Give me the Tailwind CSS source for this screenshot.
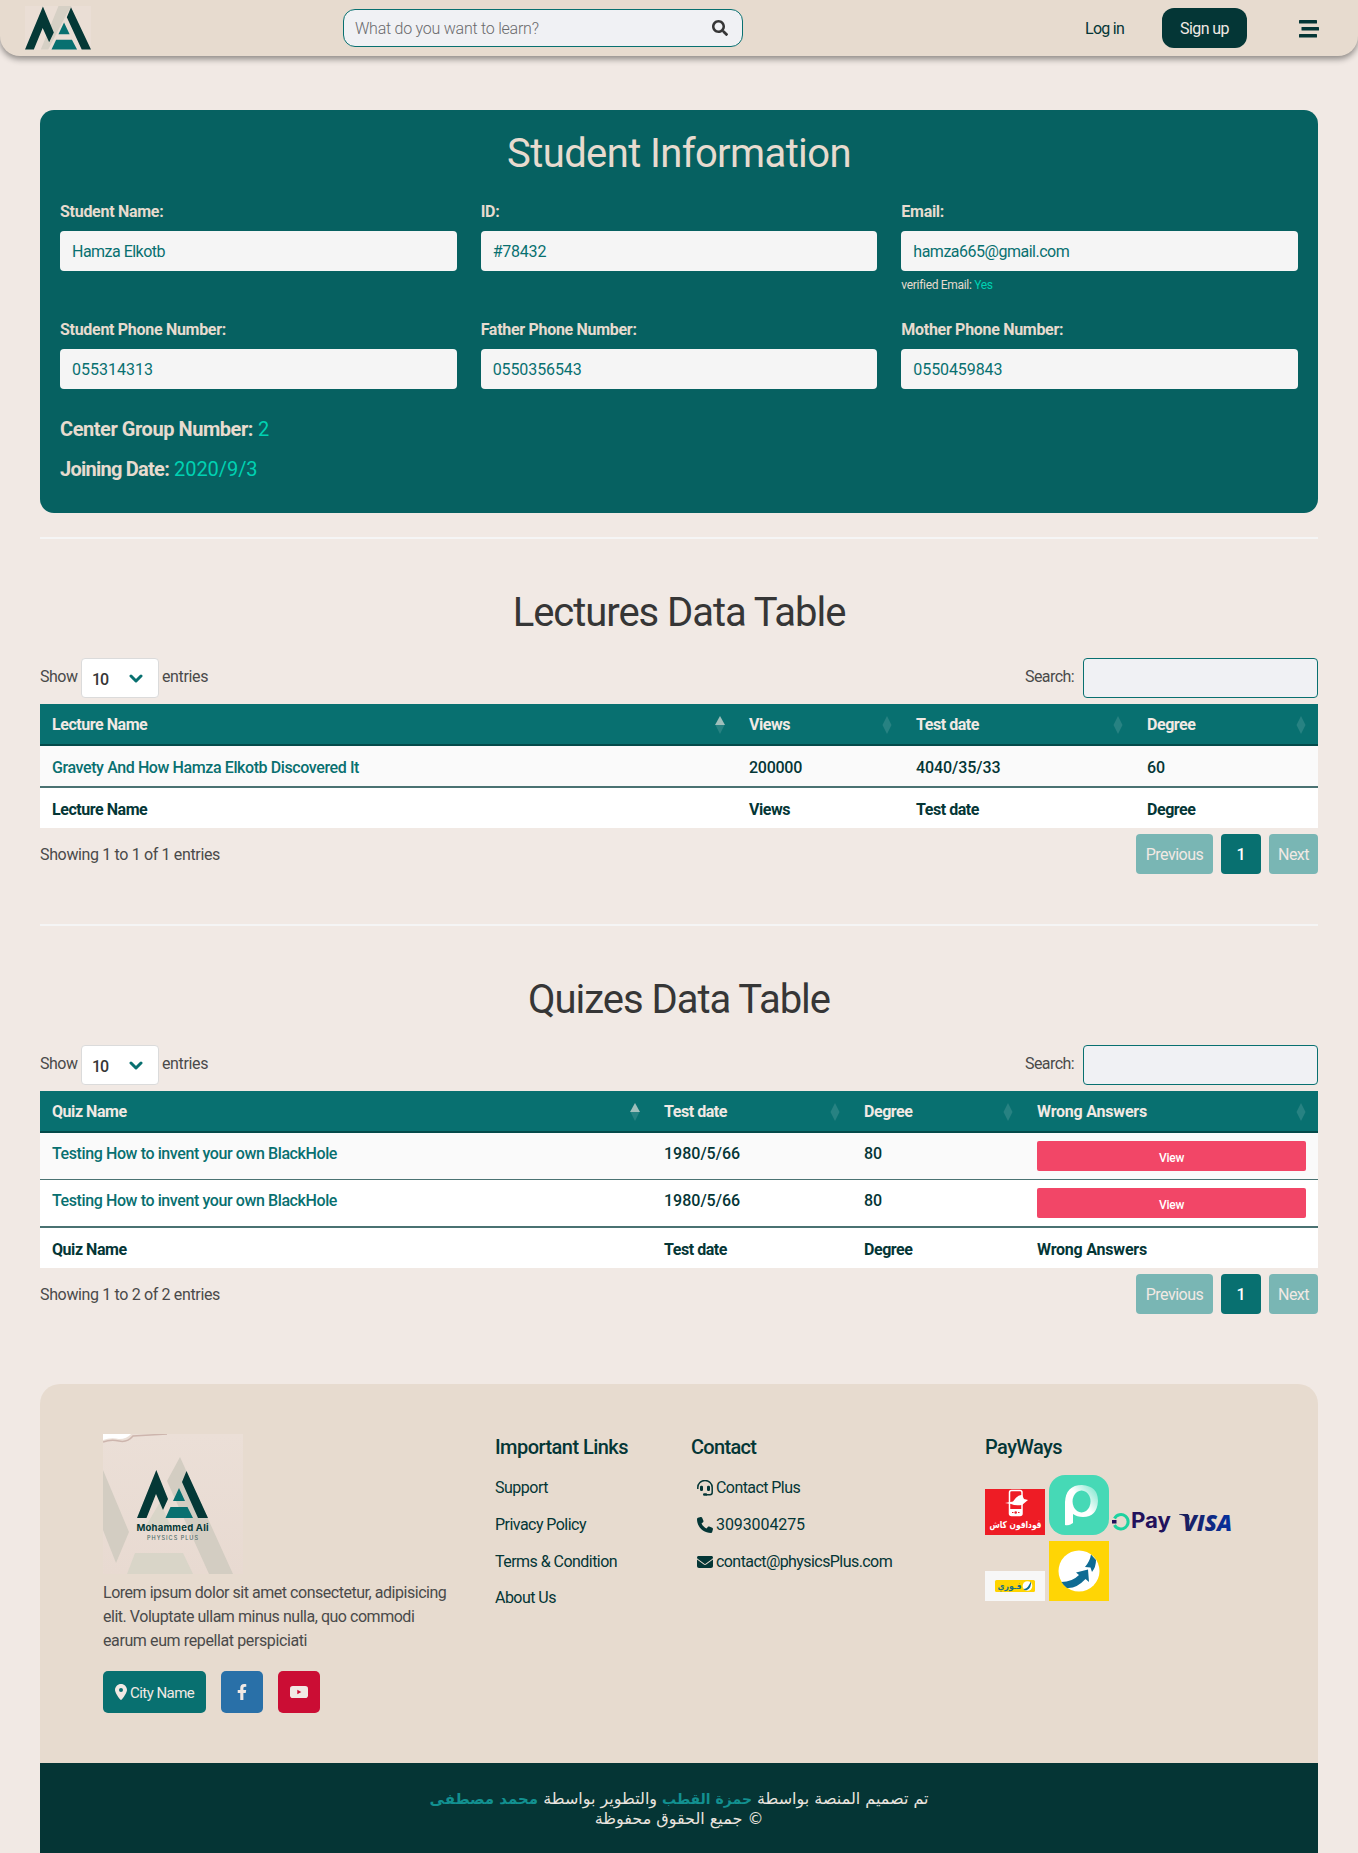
<!DOCTYPE html>
<html lang="en">
<head>
<meta charset="utf-8">
<title>Physics Plus</title>
<script src="https://cdn.jsdelivr.net/npm/@tailwindcss/browser@4"></script>
</head>
<body class="h-[1853px] overflow-hidden bg-[#f1e9e4] font-['Roboto','DejaVu_Sans',sans-serif] text-base leading-6 text-[#4a4a4a]">

<svg class="hidden">
  <symbol id="mark" viewBox="34 35.5 71 49" preserveAspectRatio="none">
    <path fill="#043836" d="M34 84 53.300 36 65 65 60 76 53 60 43.500 84ZM83.500 37 105 84H95L79 48Z"/>
    <path fill="#087070" d="M76 54 82 67H70ZM67.500 73H84.500L90 84H62.500Z"/>
  </symbol>
  <symbol id="chevron" viewBox="0 0 14 9"><path d="M2 2 7 7 12 2" fill="none" stroke="#087070" stroke-width="3" stroke-linecap="round" stroke-linejoin="round"/></symbol>
  <symbol id="sort" viewBox="0 0 10 18"><path d="M5 0 9.500 9H.5Z" fill="#fff" fill-opacity=".13"/><path d="M5 18 9.500 9H.5Z" fill="#fff" fill-opacity=".13"/></symbol>
  <symbol id="sort-up" viewBox="0 0 10 18"><path d="M5 0 10 9H0Z" fill="#f1e9e4" fill-opacity=".65"/><path d="M5 18 9.500 9H.5Z" fill="#fff" fill-opacity=".13"/></symbol>
</svg>

<nav class="flex h-14 items-center rounded-b-[20px] bg-[#e7dbcf] pl-[25px] shadow-[0_3px_6px_rgba(0,0,0,0.42)]">
  <div class="h-11 w-[66px] bg-[#eaded5]">
    <svg class="h-11 w-[66px]" viewBox="34 35.500 71 49" preserveAspectRatio="none">
      <path fill="#d6d0c5" d="M70 35.500H84L77 48 59 84H51Z"/>
      <use href="#mark" x="34" y="35.500" width="71" height="49"/>
    </svg>
  </div>
  <div class="ml-[252px] flex h-[38px] w-[400px] items-center justify-between rounded-xl border border-[#087070] bg-[#f0f1f4] pr-[14px] pl-[11px]">
    <span class="pt-px font-light tracking-[-0.24px] text-[#6a6a6c]">What do you want to learn?</span>
    <svg class="size-4" viewBox="0 0 512 512" fill="#363636"><path d="M505 442.700L405.300 343c-4.500-4.500-10.600-7-17-7H372c27.600-35.300 44-79.700 44-128C416 93.100 322.900 0 208 0S0 93.100 0 208s93.100 208 208 208c48.300 0 92.700-16.400 128-44v16.300c0 6.400 2.500 12.500 7 17l99.700 99.700c9.400 9.400 24.600 9.400 33.900 0l28.300-28.300c9.400-9.400 9.400-24.600.1-34zM208 336c-70.700 0-128-57.200-128-128 0-70.700 57.200-128 128-128 70.700 0 128 57.200 128 128 0 70.700-57.200 128-128 128z"/></svg>
  </div>
  <a class="ml-[342px] w-[40px] pt-[2px] whitespace-nowrap tracking-[-0.74px] text-[#043636]">Log in</a>
  <a class="ml-[37px] flex h-10 w-[85px] items-center justify-center rounded-xl bg-[#043636] pt-[2px] tracking-[-0.57px] text-[#f1e9e4]">Sign up</a>
  <svg class="ml-[52px] mt-[2px] h-[18px] w-[20px]" viewBox="0 0 20 18" fill="#043636"><rect width="18" height="3.500" rx=".6"/><rect x="2.500" y="7" width="17.500" height="3.500" rx=".6"/><rect y="14" width="18" height="3.500" rx=".6"/></svg>
</nav>

<main class="mx-10 pt-[54px]">
  <section class="h-[403px] rounded-[14px] bg-[#066161] px-5 pt-[14px] text-[#e7dbcf]">
    <h1 class="h-[60px] text-center text-[40px] leading-[60px] font-normal tracking-[-0.62px]">Student Information</h1>
    <div class="mt-4 grid grid-cols-3 gap-x-6 font-normal">
      <div class="h-[118px]">
        <div class="font-bold tracking-[-0.28px]">Student Name:</div>
        <div class="mt-[7px] flex h-10 items-center rounded bg-[#f5f5f5] px-3 pt-[2px] tracking-[-0.52px] text-[#087070]">Hamza Elkotb</div>
      </div>
      <div class="h-[118px]">
        <div class="font-bold tracking-[-0.28px]">ID:</div>
        <div class="mt-[7px] flex h-10 items-center rounded bg-[#f5f5f5] px-3 pt-[2px] tracking-[-0.22px] text-[#087070]">#78432</div>
      </div>
      <div class="h-[118px]">
        <div class="font-bold tracking-[-0.28px]">Email:</div>
        <div class="mt-[7px] flex h-10 items-center rounded bg-[#f5f5f5] px-3 pt-[2px] tracking-[-0.49px] text-[#087070]">hamza665@gmail.com</div>
        <div class="mt-[5px] text-xs leading-[18px] tracking-[-0.31px]">verified Email: <span class="text-[#00d1b2]">Yes</span></div>
      </div>
      <div class="h-[100px]">
        <div class="font-bold tracking-[-0.3px]">Student Phone Number:</div>
        <div class="mt-[7px] flex h-10 items-center rounded bg-[#f5f5f5] px-3 pt-[2px] text-[#087070]">055314313</div>
      </div>
      <div class="h-[100px]">
        <div class="font-bold tracking-[-0.3px]">Father Phone Number:</div>
        <div class="mt-[7px] flex h-10 items-center rounded bg-[#f5f5f5] px-3 pt-[2px] tracking-[-0.09px] text-[#087070]">0550356543</div>
      </div>
      <div class="h-[100px]">
        <div class="font-bold tracking-[-0.3px]">Mother Phone Number:</div>
        <div class="mt-[7px] flex h-10 items-center rounded bg-[#f5f5f5] px-3 pt-[2px] tracking-[-0.09px] text-[#087070]">0550459843</div>
      </div>
    </div>
    <div class="-mt-[9px] text-xl leading-10 text-[#00d1b2]">
      <div><b class="tracking-[-0.45px] text-[#e7dbcf]">Center Group Number:</b> 2</div>
      <div><b class="tracking-[-0.75px] text-[#e7dbcf]">Joining Date:</b> <span class="tracking-[-0.05px]">2020/9/3</span></div>
    </div>
  </section>

  <hr class="mt-6 h-0.5 border-0 bg-[#f5f5f5]">

  <section>
    <h2 class="mt-[43px] h-[60px] text-center text-[40px] leading-[62px] font-normal tracking-[-1.05px] text-[#363636]">Lectures Data Table</h2>
    <div class="mt-4 flex h-10 items-start">
      <span class="w-[41px] pt-[7px] tracking-[-0.49px]">Show</span>
      <div class="flex h-10 w-[78px] items-center justify-between rounded border border-[#dbdbdb] bg-white pr-[15px] pl-[10px] font-medium tracking-[-1px] text-[#363636]"><span class="pt-[3px]">10</span><svg class="h-[9px] w-[14px]"><use href="#chevron"/></svg></div>
      <span class="pt-[7px] pl-[3px] tracking-[-0.37px]">entries</span>
      <span class="ml-auto pt-[7px] tracking-[-0.57px]">Search:</span>
      <div class="ml-[9px] h-10 w-[235px] rounded border border-[#087070] bg-[#f0f1f4]"></div>
    </div>
    <table class="mt-[6px] w-full table-fixed border-separate border-spacing-0 bg-white text-left text-[#043636]">
      <colgroup><col class="w-[697px]"><col class="w-[167px]"><col class="w-[231px]"><col></colgroup>
      <thead class="bg-[#087070] text-[#f1e9e4]">
        <tr class="tracking-[-0.45px]">
          <th class="h-[42px] border-b-2 border-[#044a4a] px-3 pt-px"><div class="flex items-center justify-between">Lecture Name<svg class="h-[18px] w-[10px]"><use href="#sort-up"/></svg></div></th>
          <th class="border-b-2 border-[#044a4a] px-3 pt-px"><div class="flex items-center justify-between">Views<svg class="h-[18px] w-[10px]"><use href="#sort"/></svg></div></th>
          <th class="border-b-2 border-[#044a4a] px-3 pt-px"><div class="flex items-center justify-between">Test date<svg class="h-[18px] w-[10px]"><use href="#sort"/></svg></div></th>
          <th class="border-b-2 border-[#044a4a] px-3 pt-px"><div class="flex items-center justify-between">Degree<svg class="h-[18px] w-[10px]"><use href="#sort"/></svg></div></th>
        </tr>
      </thead>
      <tbody class="bg-[#fafafa] font-medium">
        <tr>
          <td class="h-[42px] border-b-2 border-[#4a7272] px-3 pt-[3px] tracking-[-0.4px] text-[#087070]">Gravety And How Hamza Elkotb Discovered It</td>
          <td class="border-b-2 border-[#4a7272] px-3 pt-[3px] tracking-[-0.26px]">200000</td>
          <td class="border-b-2 border-[#4a7272] px-3 pt-[3px] tracking-[-0.07px]">4040/35/33</td>
          <td class="border-b-2 border-[#4a7272] px-3 pt-[3px]">60</td>
        </tr>
      </tbody>
      <tfoot><tr class="tracking-[-0.45px]"><th class="h-10 px-3 pt-[3px]">Lecture Name</th><th class="px-3 pt-[3px]">Views</th><th class="px-3 pt-[3px]">Test date</th><th class="px-3 pt-[3px]">Degree</th></tr></tfoot>
    </table>
    <div class="mt-[6px] flex h-10 items-center">
      <span class="mr-auto pt-[2px] tracking-[-0.35px]">Showing 1 to 1 of 1 entries</span>
      <span class="flex h-10 w-[77px] items-center justify-center rounded bg-[#79b6b4] pt-[2px] tracking-[-0.51px] text-[#f1e9e4]">Previous</span>
      <span class="ml-2 flex h-10 w-10 items-center justify-center rounded bg-[#087070] pt-[2px] font-medium text-white">1</span>
      <span class="ml-2 flex h-10 w-[49px] items-center justify-center rounded bg-[#79b6b4] pt-[2px] tracking-[-0.52px] text-[#f1e9e4]">Next</span>
    </div>
  </section>

  <hr class="mt-[50px] h-0.5 border-0 bg-[#f5f5f5]">

  <section>
    <h2 class="mt-[43px] h-[60px] text-center text-[40px] leading-[62px] font-normal tracking-[-1.03px] text-[#363636]">Quizes Data Table</h2>
    <div class="mt-4 flex h-10 items-start">
      <span class="w-[41px] pt-[7px] tracking-[-0.49px]">Show</span>
      <div class="flex h-10 w-[78px] items-center justify-between rounded border border-[#dbdbdb] bg-white pr-[15px] pl-[10px] font-medium tracking-[-1px] text-[#363636]"><span class="pt-[3px]">10</span><svg class="h-[9px] w-[14px]"><use href="#chevron"/></svg></div>
      <span class="pt-[7px] pl-[3px] tracking-[-0.37px]">entries</span>
      <span class="ml-auto pt-[7px] tracking-[-0.57px]">Search:</span>
      <div class="ml-[9px] h-10 w-[235px] rounded border border-[#087070] bg-[#f0f1f4]"></div>
    </div>
    <table class="mt-[6px] w-full table-fixed border-separate border-spacing-0 bg-white text-left text-[#043636]">
      <colgroup><col class="w-[612px]"><col class="w-[200px]"><col class="w-[173px]"><col></colgroup>
      <thead class="bg-[#087070] text-[#f1e9e4]">
        <tr class="tracking-[-0.45px]">
          <th class="h-[42px] border-b-2 border-[#044a4a] px-3 pt-px"><div class="flex items-center justify-between">Quiz Name<svg class="h-[18px] w-[10px]"><use href="#sort-up"/></svg></div></th>
          <th class="border-b-2 border-[#044a4a] px-3 pt-px"><div class="flex items-center justify-between">Test date<svg class="h-[18px] w-[10px]"><use href="#sort"/></svg></div></th>
          <th class="border-b-2 border-[#044a4a] px-3 pt-px"><div class="flex items-center justify-between">Degree<svg class="h-[18px] w-[10px]"><use href="#sort"/></svg></div></th>
          <th class="border-b-2 border-[#044a4a] px-3 pt-px"><div class="flex items-center justify-between"><span class="tracking-[-0.21px]">Wrong Answers</span><svg class="h-[18px] w-[10px]"><use href="#sort"/></svg></div></th>
        </tr>
      </thead>
      <tbody class="align-top font-medium">
        <tr class="bg-[#fafafa]">
          <td class="h-[47px] border-b border-[#4a7272] px-3 pt-[9px] align-top tracking-[-0.4px] text-[#087070]">Testing How to invent your own BlackHole</td>
          <td class="border-b border-[#4a7272] px-3 pt-[9px] align-top">1980/5/66</td>
          <td class="border-b border-[#4a7272] px-3 pt-[9px] align-top">80</td>
          <td class="border-b border-[#4a7272] px-3 pt-2 align-top"><div class="flex h-[30px] items-center justify-center rounded-[2px] bg-[#f24667] pt-[3px] text-xs tracking-[-0.28px] text-white">View</div></td>
        </tr>
        <tr>
          <td class="h-[48px] border-b-2 border-[#4a7272] px-3 pt-[9px] align-top tracking-[-0.4px] text-[#087070]">Testing How to invent your own BlackHole</td>
          <td class="border-b-2 border-[#4a7272] px-3 pt-[9px] align-top">1980/5/66</td>
          <td class="border-b-2 border-[#4a7272] px-3 pt-[9px] align-top">80</td>
          <td class="border-b-2 border-[#4a7272] px-3 pt-2 align-top"><div class="flex h-[30px] items-center justify-center rounded-[2px] bg-[#f24667] pt-[3px] text-xs tracking-[-0.28px] text-white">View</div></td>
        </tr>
      </tbody>
      <tfoot><tr class="tracking-[-0.45px]"><th class="h-10 px-3 pt-[3px]">Quiz Name</th><th class="px-3 pt-[3px]">Test date</th><th class="px-3 pt-[3px]">Degree</th><th class="px-3 pt-[3px] tracking-[-0.21px]">Wrong Answers</th></tr></tfoot>
    </table>
    <div class="mt-[6px] flex h-10 items-center">
      <span class="mr-auto pt-[2px] tracking-[-0.35px]">Showing 1 to 2 of 2 entries</span>
      <span class="flex h-10 w-[77px] items-center justify-center rounded bg-[#79b6b4] pt-[2px] tracking-[-0.51px] text-[#f1e9e4]">Previous</span>
      <span class="ml-2 flex h-10 w-10 items-center justify-center rounded bg-[#087070] pt-[2px] font-medium text-white">1</span>
      <span class="ml-2 flex h-10 w-[49px] items-center justify-center rounded bg-[#79b6b4] pt-[2px] tracking-[-0.52px] text-[#f1e9e4]">Next</span>
    </div>
  </section>

  <footer class="mt-[70px]">
    <div class="flex h-[379px] rounded-t-[20px] bg-[#e7dbcf] pt-[50px] pl-[63px] text-[#043636]">
      <div class="w-[392px] text-[#4a4a4a]">
        <svg class="block size-[140px]" viewBox="0 0 140 140">
          <defs><linearGradient id="paper" x1="0" y1="0" x2="0" y2="1"><stop offset="0" stop-color="#ebdfd7"/><stop offset="1" stop-color="#e8dad1"/></linearGradient></defs>
          <rect width="140" height="140" fill="url(#paper)"/>
          <path fill="#fff" d="M0 0H28Q24 5 16 5 8 3 0 6Z"/>
          <path fill="none" stroke="#cdb5ad" stroke-width="1.500" d="M0 8Q8 5 16 7T30 2L64 0"/>
          <path fill="#d3cdc2" d="M77 23 130 140H106L64 47ZM0 36 26 98 13 129 0 96Z"/>
          <path fill="#d9d5c8" d="M57 68 70 97H40ZM32 119H80L90 140H24Z"/>
          <use href="#mark" x="34" y="35.500" width="71" height="49"/>
          <text x="33.500" y="97" textLength="72" font-size="9.500" font-weight="700" fill="#043836" font-family="Inter">Mohammed Ali</text>
          <text x="44" y="106" textLength="51" font-size="5.500" font-weight="500" fill="#4a6b68" font-family="Inter">PHYSICS PLUS</text>
        </svg>
        <p class="mt-[7px] whitespace-nowrap tracking-[-0.47px]">Lorem ipsum dolor sit amet consectetur, adipisicing<br>elit. Voluptate ullam minus nulla, quo commodi<br><span class="tracking-[-0.39px]">earum eum repellat perspiciati</span></p>
        <div class="mt-[18px] flex gap-[15px] text-[#f1e9e4]">
          <div class="flex h-[42px] w-[103px] items-center rounded-[5px] bg-[#087070] pl-3 text-[15px] tracking-[-0.55px]"><svg class="mr-[3px] h-4 w-3" viewBox="0 0 384 512" fill="currentColor"><path d="M215.700 499.200C267 435 384 279.400 384 192C384 86 298 0 192 0S0 86 0 192c0 87.400 117 243 168.300 307.200c12.300 15.300 35.100 15.300 47.400 0zM192 128a64 64 0 1 1 0 128 64 64 0 1 1 0-128z"/></svg><span class="pt-px">City Name</span></div>
          <div class="flex size-[42px] items-center justify-center rounded-[5px] bg-[#2970a8]"><svg class="h-4 w-[10px]" viewBox="0 0 320 512" fill="currentColor"><path d="M279.140 288l14.220-92.660h-88.910v-60.130c0-25.350 12.420-50.060 52.240-50.060h40.420V6.260S260.430 0 225.360 0c-73.220 0-121.080 44.380-121.080 124.720v70.620H22.890V288h81.390v224h100.170V288z"/></svg></div>
          <div class="flex size-[42px] items-center justify-center rounded-[5px] bg-[#cb0d34]"><svg class="h-3 w-[18px]" viewBox="0 0 18 12"><rect width="18" height="12" rx="2.800" fill="#f1e9e4"/><path fill="#cb0d34" d="M7.300 3.700 11.300 6 7.300 8.300Z"/></svg></div>
        </div>
      </div>
      <div class="w-[196px] tracking-[-0.54px]">
        <h3 class="h-[27px] text-xl leading-[27px] font-medium tracking-[-0.55px]">Important Links</h3>
        <ul class="mt-[15px] flex flex-col gap-[13px]"><li class="tracking-[-0.49px]">Support</li><li>Privacy Policy</li><li>Terms &amp; Condition</li><li class="-mt-px">About Us</li></ul>
      </div>
      <div class="w-[294px] tracking-[-0.57px]">
        <h3 class="h-[27px] text-xl leading-[27px] font-medium tracking-[-0.7px]">Contact</h3>
        <ul class="mt-[15px] flex flex-col gap-[13px] pl-[6px]">
          <li class="flex items-center gap-[3px]"><svg class="size-4" viewBox="0 0 16 16" fill="none" stroke="currentColor" stroke-width="1.500"><path d="M.8 9V7.500a7.200 7 0 0 1 14.400 0V12.500a2.200 2.200 0 0 1-2.200 2.200H9" /><rect x="6" y="13.200" width="4.200" height="2.600" rx="1.200" fill="currentColor" stroke="none"/><rect x="3" y="5.700" width="3" height="5.300" rx="1.200" fill="currentColor" stroke="none"/><rect x="10" y="5.700" width="3" height="5.300" rx="1.200" fill="currentColor" stroke="none"/></svg>Contact Plus</li>
          <li class="flex items-center gap-[3px] tracking-[-0.09px]"><svg class="size-4" viewBox="0 0 512 512" fill="currentColor"><path d="M164.900 24.600c-7.700-18.600-28-28.500-47.400-23.200l-88 24C12.100 30.200 0 46 0 64C0 311.400 200.600 512 448 512c18 0 33.800-12.100 38.600-29.500l24-88c5.300-19.400-4.600-39.700-23.200-47.400l-96-40c-16.300-6.800-35.200-2.100-46.300 11.600L304.700 368C234.300 334.700 177.300 277.700 144 207.300L193.300 167c13.700-11.200 18.400-30 11.600-46.300l-40-96z"/></svg>3093004275</li>
          <li class="flex items-center gap-[3px]"><svg class="size-4" viewBox="0 0 512 512" fill="currentColor"><path d="M48 64C21.500 64 0 85.500 0 112c0 15.100 7.100 29.300 19.200 38.400L236.800 313.600c11.400 8.500 27 8.500 38.400 0L492.800 150.400c12.100-9.100 19.200-23.300 19.200-38.400c0-26.500-21.500-48-48-48H48zM0 176V384c0 35.300 28.700 64 64 64H448c35.300 0 64-28.700 64-64V176L294.400 339.200c-22.800 17.100-54 17.100-76.800 0L0 176z"/></svg>contact@physicsPlus.com</li>
        </ul>
      </div>
      <div>
        <h3 class="h-[27px] text-xl leading-[27px] font-medium tracking-[-0.58px]">PayWays</h3>
        <div class="mt-[14px] flex h-[60px] items-end gap-1">
          <svg class="h-[46px] w-[60px]" viewBox="0 0 60 46"><rect width="60" height="46" fill="#ee1c25"/><rect x="24.500" y="1.500" width="12.500" height="25" rx="2" fill="none" stroke="#fff" stroke-width="1.500"/><path fill="#fff" d="M24 20H37V26H24ZM20 14 28 12.500Q33 5 37 6L39 10 43 11 37 16Q30 17 26 15Z"/><circle cx="30.700" cy="23.500" r="1.300" fill="#ee1c25"/><path d="M27 23.500h1.500M33 23.500h1.500" stroke="#ee1c25"/><text x="30.500" y="38.500" text-anchor="middle" font-size="9.500" font-weight="700" fill="#fff" font-family="DejaVu Sans" textLength="52" lengthAdjust="spacingAndGlyphs">ڤودافون كاش</text></svg>
          <svg class="size-[60px]" viewBox="0 0 60 60"><defs><linearGradient id="pg" x1="0" y1="1" x2="1" y2="0"><stop offset=".55" stop-color="#fff"/><stop offset="1" stop-color="#6fe3c8"/></linearGradient></defs><rect width="60" height="60" rx="16" fill="#46d9b6"/><path fill="url(#pg)" fill-rule="evenodd" d="M16 50V27Q17 10 33 10 49 11 49 26 48 42 34 42 28 42 24 39V48Q20 51 16 50ZM32.500 15.500A9 11 0 1 0 32.600 15.500Z"/></svg>
          <svg class="-ml-px h-[60px] w-[61px] overflow-visible" viewBox="0 0 61 60"><path d="M2.500 43.500A7.200 7.200 0 1 1 2.500 50" fill="none" stroke="#1ed2a0" stroke-width="3"/><rect y="45" width="4.500" height="3.500" fill="#22115c"/><text x="19" y="53" font-family="Inter" font-size="21" font-weight="700" fill="#22115c" textLength="40" lengthAdjust="spacingAndGlyphs">Pay</text></svg>
          <svg class="h-[60px] w-[64px] overflow-visible" viewBox="0 0 64 60"><defs><linearGradient id="vg"><stop offset="0" stop-color="#1b1f5c"/><stop offset="1" stop-color="#0531a0"/></linearGradient></defs><path fill="#1b1f5c" d="M2 39H11L13 45Q8 40.500 2 39.500Z"/><text x="6" y="56" font-family="Open Sans" font-size="23.500" font-weight="800" font-style="italic" fill="url(#vg)" textLength="49" lengthAdjust="spacingAndGlyphs">VISA</text></svg>
        </div>
        <div class="mt-[6px] flex h-[60px] items-end gap-1">
          <svg class="h-[30px] w-[60px]" viewBox="0 0 60 30"><rect width="60" height="30" fill="#f7f7f7"/><rect x="10" y="9" width="40" height="12" rx="1.500" fill="#ffd400"/><circle cx="42.500" cy="15" r="4.800" fill="#fff"/><path fill="#0e6b93" d="M38.500 18Q42 18 44 14L46 10.500Q46.500 17 42 19Q40 20 38.500 18Z"/><text x="24.500" y="18" text-anchor="middle" font-size="9" font-weight="700" fill="#1a6f85" font-family="DejaVu Sans" textLength="24" lengthAdjust="spacingAndGlyphs">فـوري</text></svg>
          <svg class="size-[60px]" viewBox="0 0 60 60"><rect width="60" height="60" fill="#ffd505"/><circle cx="30" cy="30" r="20.500" fill="#fff"/><path fill="#0e6b93" d="M12.500 41Q23 41 30 34L27 31.500 39 28.500 40 41 36.500 38Q27 48 18 47 14.500 44.500 12.500 41ZM36 26Q41 20 42 13.500L47 19Q47 26 43 31L41.500 26.500Z"/></svg>
        </div>
      </div>
    </div>
    <div dir="rtl" class="flex h-[90px] flex-col items-center bg-[#053535] pt-[26px] font-['DejaVu_Sans',sans-serif] text-base leading-5 text-[#e9e4df]">
      <p class="flex h-5 items-baseline gap-[5px] whitespace-nowrap"><span>تم تصميم المنصة بواسطة</span><b class="text-[14px] text-[#129090]">حمزة القطب</b><span>والتطوير بواسطة</span><b class="text-[15px] text-[#129090]">محمد مصطفى</b></p>
      <p>© جميع الحقوق محفوظة</p>
    </div>
  </footer>
</main>
</body>
</html>
